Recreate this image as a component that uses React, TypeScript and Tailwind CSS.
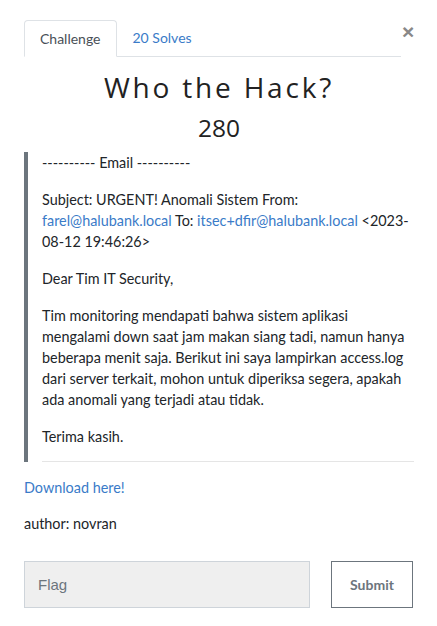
export default function App() {
  return (
    <div className="min-h-screen bg-white font-['Lato',sans-serif] text-[14.4px] leading-[21px] text-[#212529]">
      <div className="px-[24px] pt-[20px] pr-[23px]">
        <div className="flex items-start">
          <ul className="flex flex-1 border-b border-[#dee2e6]">
            <li className="-mb-px rounded-t-[4px] border border-[#dee2e6] border-b-white bg-white px-[15px] py-[7px] text-[14px] text-[#495057]">
              Challenge
            </li>
            <li className="px-[16px] py-[7px] text-[14px] text-[#3a7bc8]">20 Solves</li>
          </ul>
          <button className="ml-[1px] mt-[1px] w-[12px] text-center font-['Liberation_Sans',sans-serif] text-[21px] font-bold leading-[21px] text-[#888]">
            ×
          </button>
        </div>

        <h2 className="pt-[13px] text-center font-['Open_Sans',sans-serif] text-[28px] leading-[34px] tracking-[0.1em] text-[#222]">
          Who the Hack?
        </h2>
        <h3 className="mb-[10px] mt-[9px] text-center font-['Open_Sans',sans-serif] text-[24.5px] leading-[29px] text-[#222]">
          280
        </h3>

        <blockquote className="mb-[15px] border-l-4 border-[#6c757d] pl-[14px]">
          <p className="mb-[16px]">---------- Email ----------</p>
          <p className="mb-[16px]">
            Subject: URGENT! Anomali Sistem From:{" "}
            <a className="text-[#3a7bc8]">farel@halubank.local</a> To:{" "}
            <a className="text-[#3a7bc8]">itsec+dfir@halubank.local</a>{" "}
            &lt;2023-08-12 19:46:26&gt;
          </p>
          <p className="mb-[16px]">Dear Tim IT Security,</p>
          <p className="mb-[16px]">
            Tim monitoring mendapati bahwa sistem aplikasi mengalami down saat
            jam makan siang tadi, namun hanya beberapa menit saja. Berikut ini
            saya lampirkan access.log dari server terkait, mohon untuk diperiksa
            segera, apakah ada anomali yang terjadi atau tidak.
          </p>
          <p className="mb-[14px]">Terima kasih.</p>
          <hr className="border-t border-[#e5e5e5]" />
        </blockquote>

        <p className="mb-[15px]">
          <a className="text-[#3a7bc8]">Download here!</a>
        </p>
        <p className="mb-[27px]">author: novran</p>

        <div className="flex items-center gap-[21px]">
          <input
            placeholder="Flag"
            className="h-[47px] w-[286px] border border-[#ced4da] bg-[#efefef] px-[13px] font-['Liberation_Sans',sans-serif] text-[15px] text-[#495057] placeholder:text-[#6c757d] outline-none"
          />
          <button className="h-[47px] w-[82px] border border-[#6c757d] bg-white text-[14px] font-bold text-[#6c757d]">
            Submit
          </button>
        </div>
      </div>
    </div>
  );
}
